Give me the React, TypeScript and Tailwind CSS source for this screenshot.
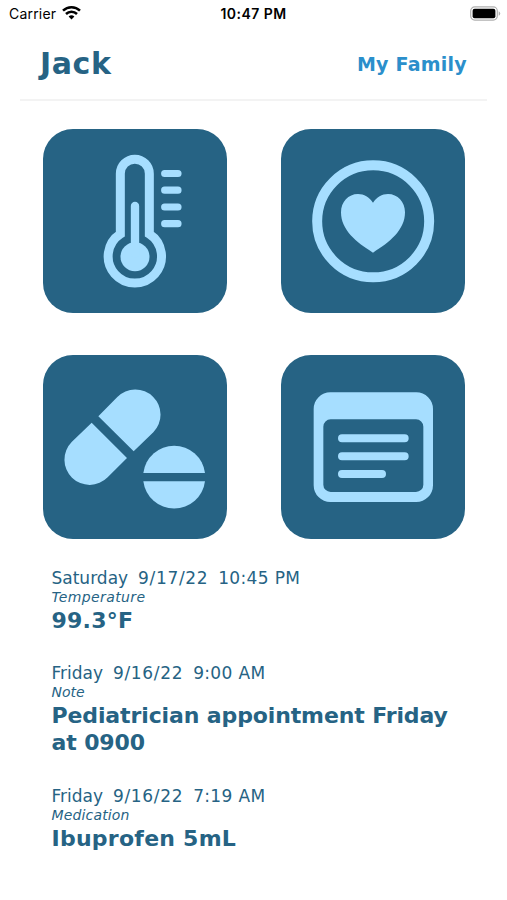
import type { ReactNode } from "react";

const entries = [
  {
    day: "Saturday",
    date: "9/17/22",
    time: "10:45 PM",
    type: "Temperature",
    typeClass: "tracking-[0.4px]",
    value: "99.3°F",
    valueClass: "tracking-[0.25px]",
  },
  {
    day: "Friday",
    date: "9/16/22",
    time: "9:00 AM",
    type: "Note",
    typeClass: "tracking-normal",
    value: "Pediatrician appointment Friday at 0900",
    valueClass: "tracking-[-0.12px]",
  },
  {
    day: "Friday",
    date: "9/16/22",
    time: "7:19 AM",
    type: "Medication",
    typeClass: "tracking-[0.15px]",
    value: "Ibuprofen 5mL",
    valueClass: "tracking-[0.25px]",
  },
];

function StatusBar() {
  return (
    <div className="grid grid-cols-3 items-center h-[26px] pl-[9px] pr-[6px] text-black font-[Inter,sans-serif]">
      <div className="flex items-center gap-[6px]">
        <span className="text-[14px] tracking-[0.2px]">Carrier</span>
        <svg width="19" height="14" viewBox="0 0 19 14" fill="none" stroke="currentColor" strokeWidth="2.5">
          <path d="M1 4.7a12.2 12.2 0 0 1 17 0" />
          <path d="M4 8a7.8 7.8 0 0 1 11 0" />
          <path d="M9.5 13.6 6.6 10.6a4.2 4.2 0 0 1 5.8 0z" fill="currentColor" stroke="none" />
        </svg>
      </div>
      <span className="-ml-[3px] text-center text-[14px] font-semibold tracking-[0.45px]">10:47 PM</span>
      <svg className="justify-self-end" width="31" height="15" viewBox="0 0 31 15">
        <rect x="0.7" y="0.9" width="26.6" height="13.2" rx="4" fill="#fff" stroke="#b0b0b0" strokeWidth="1.2" />
        <rect x="2.6" y="2.8" width="22.8" height="9.4" rx="2" fill="#000" />
        <path d="M28.7 5.2a2.5 2.5 0 0 1 0 4.6z" fill="#b0b0b0" />
      </svg>
    </div>
  );
}

function Tile({ label, children }: { label: string; children: ReactNode }) {
  return (
    <button aria-label={label} className="size-[184px] rounded-[30px] bg-[#266384] text-[#a6deff]">
      <svg className="size-full" viewBox="24 27 552 552" fill="currentColor">
        {children}
      </svg>
    </button>
  );
}

function TemperatureIcon() {
  return (
    <>
      <path
        d="M256 342V161a43.500 43.500 0 0 1 87 0V342A80 80 0 1 1 256 342Z"
        fill="none"
        stroke="currentColor"
        strokeWidth="27"
      />
      <circle cx="300" cy="410" r="43.500" />
      <path d="M300 258V400" stroke="currentColor" strokeWidth="25" strokeLinecap="round" />
      <path
        d="M389 160.500H429M389 210.500H429M389 261H429M389 311H429"
        stroke="currentColor"
        strokeWidth="21.500"
        strokeLinecap="round"
      />
    </>
  );
}

function HeartIcon() {
  return (
    <>
      <circle cx="300.500" cy="304" r="168" fill="none" stroke="currentColor" strokeWidth="30" />
      <path d="M300 248C289 232 273 222 255 222C226 222 204 246 204 277C204 330 250 367 300 398C350 367 396 330 396 277C396 246 374 222 345 222C327 222 311 232 300 248Z" />
    </>
  );
}

function PillsIcon() {
  return (
    <>
      <path d="M190 211 247 153A75.500 75.500 0 0 1 355 259L296 316Z" />
      <path d="M170 230 276 336 218 394A75.500 75.500 0 0 1 110 288Z" />
      <path d="M325 381A93.200 93.200 0 0 1 510 381Z" />
      <path d="M325 406A93.200 93.200 0 0 0 510 406Z" />
    </>
  );
}

function NoteIcon() {
  return (
    <>
      <path
        fillRule="evenodd"
        d="M172 139H430A50 50 0 0 1 480 189V418A50 50 0 0 1 430 468H172A50 50 0 0 1 122 418V189A50 50 0 0 1 172 139ZM173 220A22 22 0 0 0 151 242V416A22 22 0 0 0 173 438H429A22 22 0 0 0 451 416V242A22 22 0 0 0 429 220Z"
      />
      <path d="M207 277H395M207 330.500H395M207 384H327" stroke="currentColor" strokeWidth="24" strokeLinecap="round" />
    </>
  );
}

export default function App() {
  return (
    <main className="w-[507px] h-[900px] overflow-hidden bg-white text-[#266384] font-['DejaVu_Sans',sans-serif]">
      <StatusBar />

      <header className="flex items-center justify-between mx-5 h-[75px] pt-0.5 pl-5 pr-5 border-b-2 border-[#f3f3f3]">
        <h1 className="text-[30px] leading-9 font-bold tracking-[0.6px]">Jack</h1>
        <button className="text-[19px] leading-7 font-bold tracking-[0.25px] text-[#2b8fcb]">My Family</button>
      </header>

      <section className="grid grid-cols-[184px_184px] gap-x-[54px] gap-y-[42px] pl-[43px] pt-7">
        <Tile label="Temperature">
          <TemperatureIcon />
        </Tile>
        <Tile label="Health">
          <HeartIcon />
        </Tile>
        <Tile label="Medication">
          <PillsIcon />
        </Tile>
        <Tile label="Notes">
          <NoteIcon />
        </Tile>
      </section>

      <ul className="flex flex-col gap-[28.4px] pl-[51.5px] pr-10 pt-[28px]">
        {entries.map((entry) => (
          <li key={entry.time}>
            <p className="flex gap-[10px] text-[17px] leading-[22px]">
              <span>{entry.day}</span>
              <span className="tracking-[0.65px]">{entry.date}</span>
              <span className="tracking-[0.35px]">{entry.time}</span>
            </p>
            <p className={`text-[14px] leading-[17px] italic ${entry.typeClass}`}>{entry.type}</p>
            <p className={`mt-px text-[22px] leading-[27px] font-bold ${entry.valueClass}`}>{entry.value}</p>
          </li>
        ))}
      </ul>
    </main>
  );
}
